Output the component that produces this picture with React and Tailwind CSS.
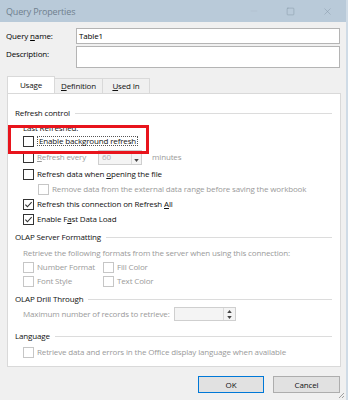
import { Square, X, Minus } from 'lucide-react';

const CheckMark = () => (
  <svg viewBox="0 0 10 10" className="h-[9px] w-[9px]" fill="none" stroke="#333" strokeWidth={1.2}>
    <path d="M1.5 5.2l2.3 2.3 4.7-5.2" />
  </svg>
);

const Box = ({ checked, disabled }) => (
  <span
    className={`flex h-[11px] w-[11px] shrink-0 items-center justify-center border bg-white ${
      disabled ? 'border-[#c6c6c6]' : 'border-[#333]'
    }`}
  >
    {checked && <CheckMark />}
  </span>
);

const Check = ({ children, checked, disabled, className = '' }) => (
  <div className={`flex h-[12px] items-center gap-[3px] whitespace-nowrap ${className}`}>
    <Box checked={checked} disabled={disabled} />
    <span className={disabled ? 'text-[#9a9a9a]' : 'text-[#111]'}>{children}</span>
  </div>
);

const GroupLabel = ({ children, className = '' }) => (
  <div className={`flex h-[12px] items-center gap-[5px] ${className}`}>
    <span className="whitespace-nowrap text-[#111]">{children}</span>
    <div className="h-px flex-1 bg-[#dcdcdc]" />
  </div>
);

const Arrow = ({ up }) => (
  <svg viewBox="0 0 6 4" className="h-[3px] w-[5px]">
    <path d={up ? 'M0 4L3 0L6 4Z' : 'M0 0L3 4L6 0Z'} fill="#444" />
  </svg>
);

export default function App() {
  return (
    <div
      className="relative h-[400px] w-[348px] overflow-hidden border-r-2 border-[#cfdbe6] bg-[#f0f0f0] text-[8px] leading-none tracking-[-0.15px]"
      style={{ fontFamily: '"Open Sans", "Noto Sans", sans-serif' }}
    >
      {/* title bar */}
      <div className="flex h-[22px] items-center bg-[#b9cad9] pl-[6px] text-[9px] text-[#6f7f8e]">
        <span>Query Properties</span>
        <div className="ml-auto flex items-center text-[#8193a4]">
          <Minus size={10} strokeWidth={1} className="mr-[27px] text-[#a9bac9]" />
          <Square size={9} strokeWidth={1.2} className="mr-[27px]" />
          <X size={11} strokeWidth={1} className="mr-[13px]" />
        </div>
      </div>

      {/* name / description */}
      <div className="flex flex-col gap-[2px] px-[6px] pt-[6px]">
        <div className="flex items-center">
          <span className="w-[70px] text-black">
            Query <span className="underline">n</span>ame:
          </span>
          <div className="flex h-[16px] flex-1 items-center border border-[#b4b4b4] bg-white pl-[2px] text-black">
            Table1
          </div>
        </div>
        <div className="flex items-start">
          <span className="w-[70px] pt-[4px] text-black">Description:</span>
          <div className="h-[22px] flex-1 border border-[#b4b4b4] bg-white" />
        </div>
      </div>

      {/* tabs */}
      <div className="mt-[9px] flex h-[16px] items-end pl-[7px]">
        <div className="relative z-10 flex h-[17px] w-[48px] items-center justify-center border border-b-0 border-[#d9d9d9] bg-white pb-[1px] text-[#111]">
          Usage
        </div>
        <div className="flex h-[15px] w-[48px] items-center justify-center border border-l-0 border-b-0 border-[#d9d9d9] bg-[#f0f0f0] text-[#111]">
          <span><span className="underline">D</span>efinition</span>
        </div>
        <div className="flex h-[15px] w-[47px] items-center justify-center border border-l-0 border-b-0 border-[#d9d9d9] bg-[#f0f0f0] text-[#111]">
          <span><span className="underline">U</span>sed In</span>
        </div>
      </div>

      {/* panel */}
      <div className="mx-[7px] flex h-[274px] w-[334px] flex-col border border-[#d9d9d9] bg-white pl-[7px] pr-[8px] pt-[13px]">
        <GroupLabel>Refresh control</GroupLabel>
        <div className="ml-[8px] mt-[3px] flex h-[12px] items-center text-[#111]">Last Refreshed:</div>
        <div className="ml-[8px] mt-[1px] flex h-[12px] items-center gap-[3px]">
          <Box />
          <span className="whitespace-nowrap border border-dotted border-[#555] px-[1px] text-[#111]">
            Enable background refresh
          </span>
        </div>
        <div className="ml-[8px] mt-[4px] flex h-[12px] items-center gap-[3px]">
          <Box />
          <span className="w-[58px] whitespace-nowrap text-[#9a9a9a]">
            <span className="underline">R</span>efresh every
          </span>
          <div className="flex h-[15px] w-[44px] border border-[#cfcfcf] bg-[#f4f4f4]">
            <span className="flex flex-1 items-center pl-[3px] text-[#b0b0b0]">60</span>
            <div className="flex w-[10px] flex-col border-l border-[#dadada]">
              <div className="flex-1" />
              <div className="flex flex-1 items-center justify-center">
                <Arrow />
              </div>
            </div>
          </div>
          <span className="ml-[7px] text-[#9a9a9a]">minutes</span>
        </div>
        <Check className="ml-[8px] mt-[5px]">
          Refresh data when <span className="underline">o</span>pening the file
        </Check>
        <Check disabled className="ml-[23px] mt-[3px]">
          Remove data from the external data range before saving the workbook
        </Check>
        <Check checked className="ml-[8px] mt-[3px]">
          Refresh this connection on Refresh <span className="underline">A</span>ll
        </Check>
        <Check checked className="ml-[8px] mt-[3px]">
          Enable F<span className="underline">a</span>st Data Load
        </Check>

        <GroupLabel className="mt-[6px]">OLAP Server Formatting</GroupLabel>
        <div className="ml-[8px] mt-[4px] flex h-[12px] items-center whitespace-nowrap text-[#9a9a9a]">
          Retrieve the following formats from the server when using this connection:
        </div>
        <div className="ml-[8px] mt-[2px] grid grid-cols-[80px_auto] gap-y-[2px]">
          <Check disabled>Number Format</Check>
          <Check disabled>Fill Color</Check>
          <Check disabled>Font Style</Check>
          <Check disabled>Text Color</Check>
        </div>

        <GroupLabel className="mt-[6px]">OLAP Drill Through</GroupLabel>
        <div className="ml-[8px] mt-[2px] flex h-[14px] items-center">
          <span className="w-[151px] shrink-0 whitespace-nowrap text-[#9a9a9a]">
            Maximum number of records to retrieve:
          </span>
          <div className="flex h-[14px] w-[62px] border border-[#cfcfcf] bg-[#f4f4f4]">
            <div className="flex-1" />
            <div className="flex w-[12px] flex-col border-l border-[#dadada]">
              <div className="flex flex-1 items-center justify-center">
                <Arrow up />
              </div>
              <div className="flex flex-1 items-center justify-center">
                <Arrow />
              </div>
            </div>
          </div>
        </div>

        <GroupLabel className="mt-[9px]">Language</GroupLabel>
        <Check disabled className="ml-[8px] mt-[4px]">
          Retrieve data and errors in the Office display language when available
        </Check>
      </div>

      {/* buttons */}
      <div className="mt-[9px] flex justify-end gap-[9px] pr-[6px]">
        <button className="flex h-[17px] w-[66px] items-center justify-center border border-[#0078d7] bg-[#e1e1e1] text-[#111]">
          OK
        </button>
        <button className="flex h-[17px] w-[67px] items-center justify-center border border-[#adadad] bg-[#e1e1e1] text-[#111]">
          Cancel
        </button>
      </div>

      {/* resize grip */}
      <svg className="absolute bottom-[1px] right-[1px] h-[8px] w-[8px]" viewBox="0 0 8 8">
        <path d="M7 2L2 7M7 5L5 7" stroke="#a0a0a0" strokeWidth={1} />
      </svg>

      {/* red annotation box */}
      <div className="absolute left-[8px] top-[125px] h-[29px] w-[141px] border-[3px] border-[#e8141c]" />
    </div>
  );
}
